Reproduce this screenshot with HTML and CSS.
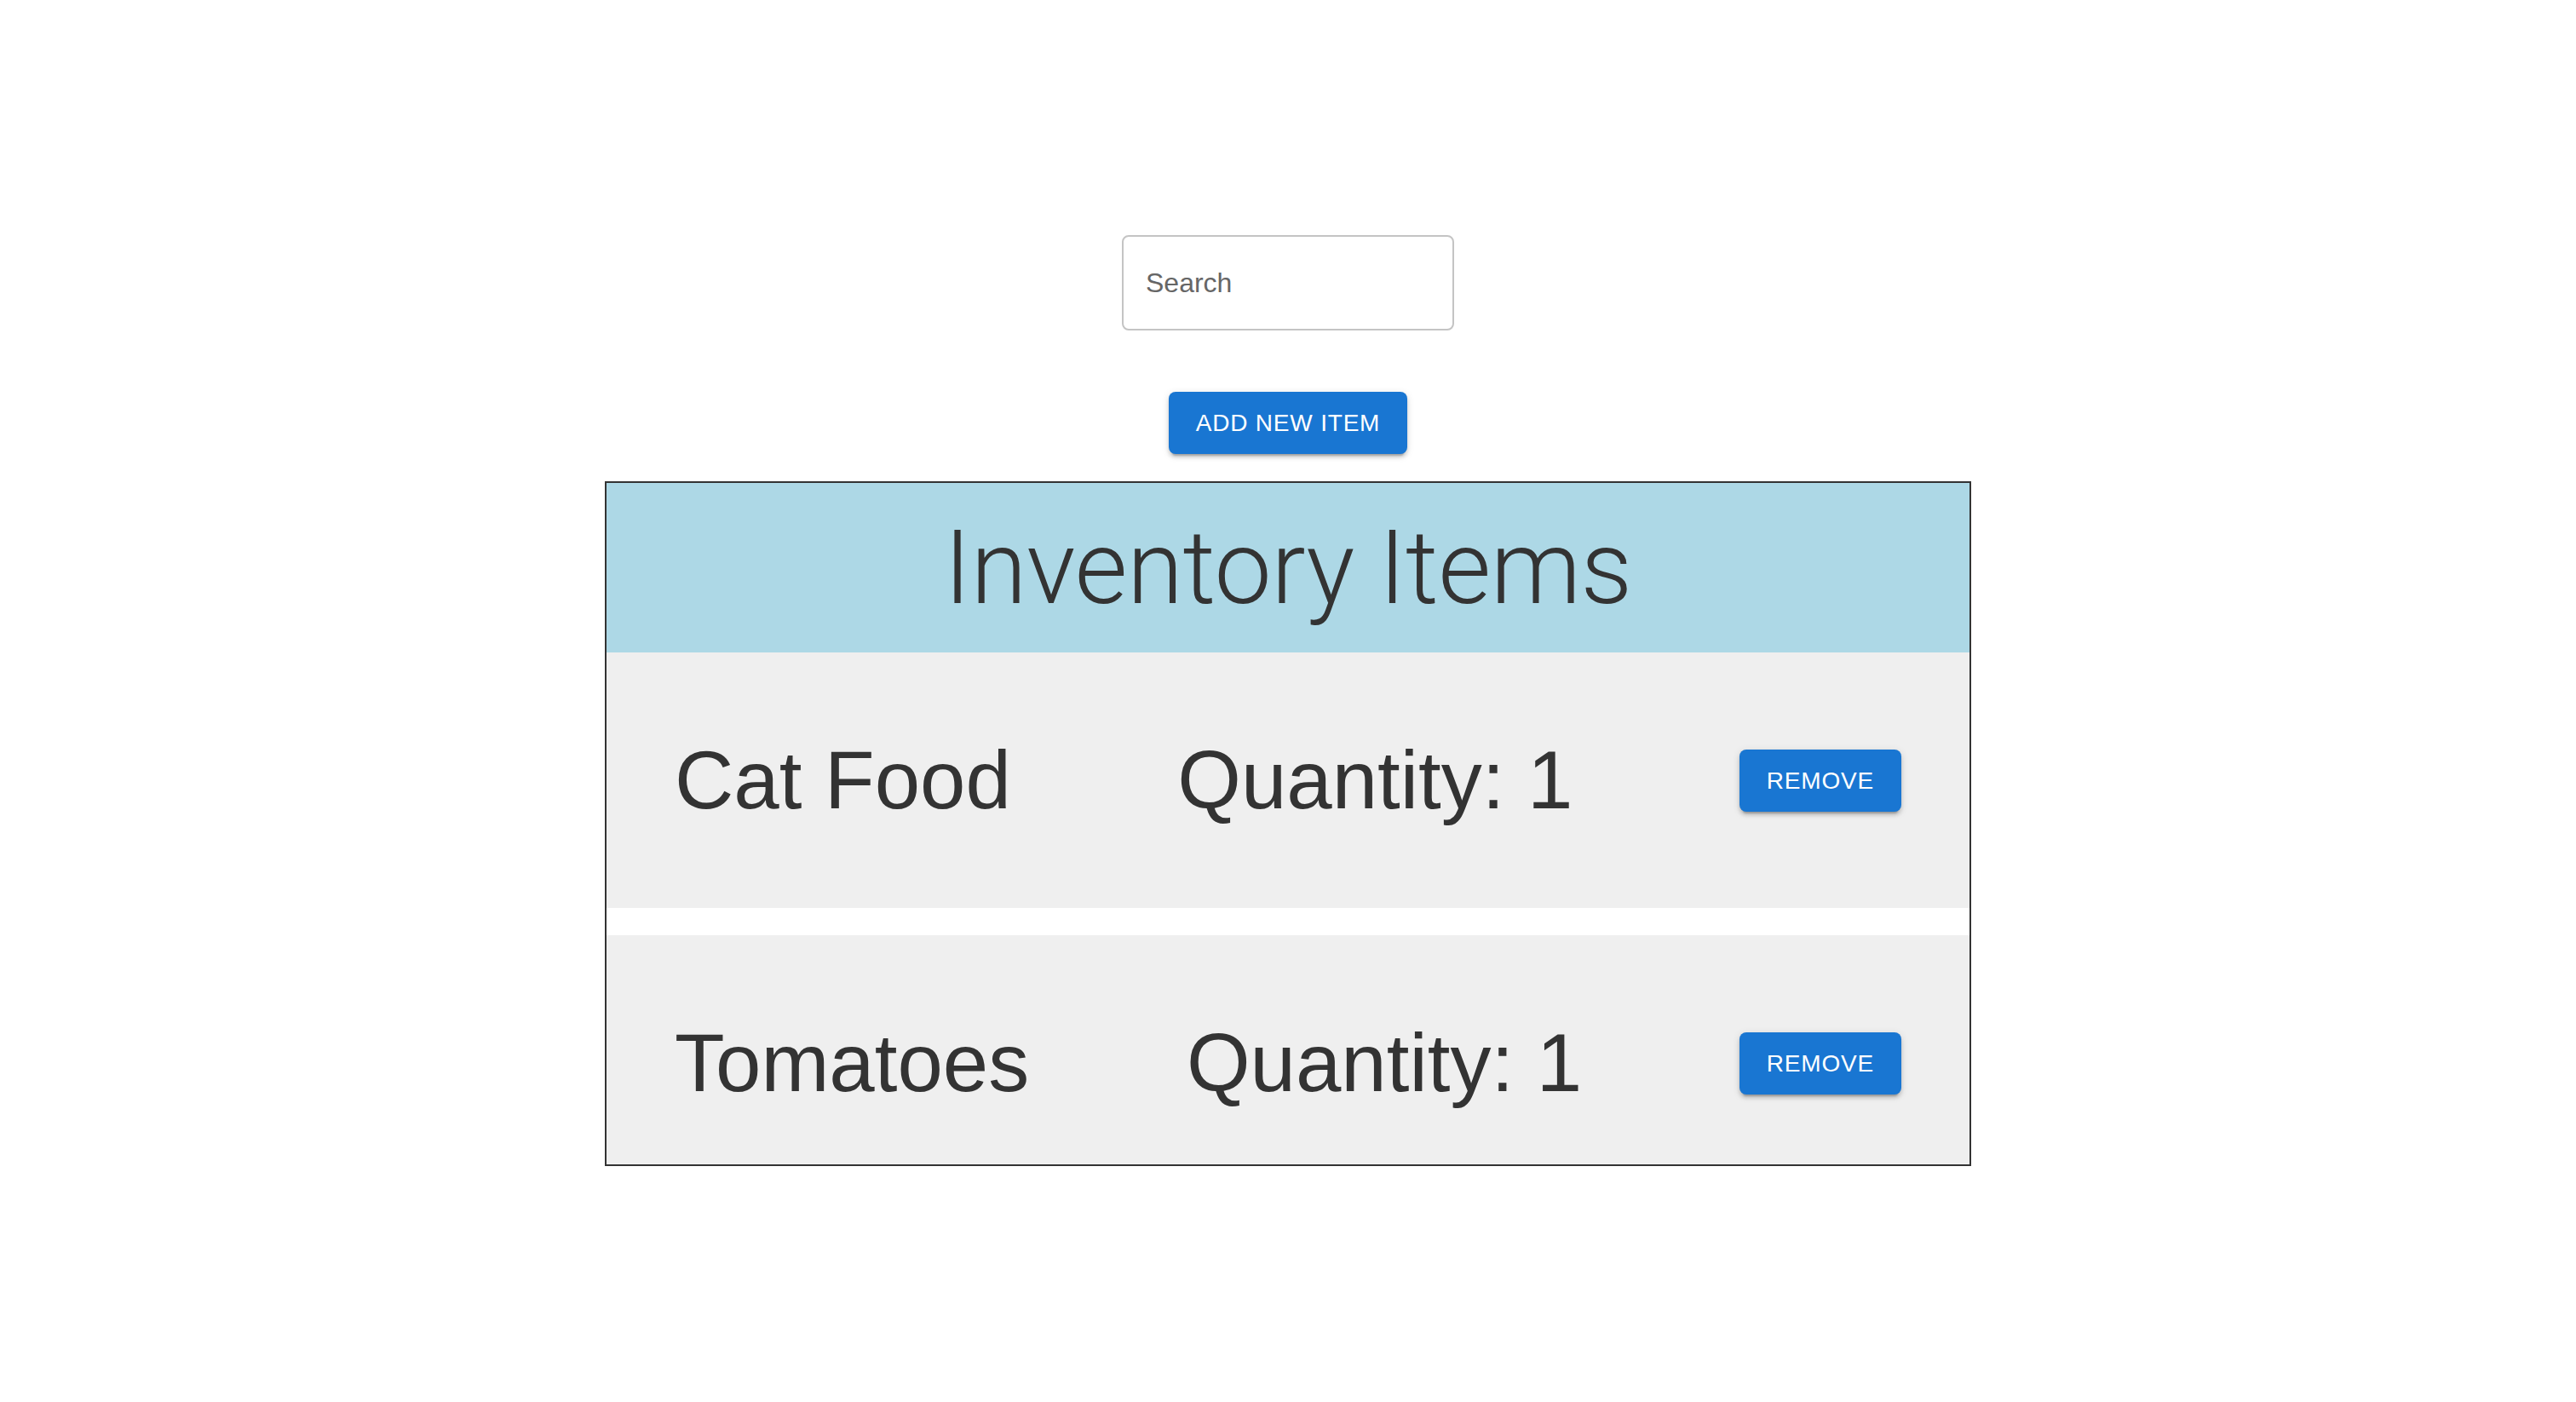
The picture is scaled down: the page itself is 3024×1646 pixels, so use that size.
FILE: index.html
```html
<!DOCTYPE html>
<html lang="en">
<head>
<meta charset="utf-8">
<title>Inventory</title>
<link rel="stylesheet" href="styles.css">
</head>
<body>
<div class="app">
  <div class="search">
    <input class="search-input" type="text" placeholder="Search">
  </div>
  <button class="btn btn-add">ADD NEW ITEM</button>
  <div class="inventory">
    <div class="inventory-header">
      <h2 class="inventory-title">Inventory Items</h2>
    </div>
    <div class="item-row">
      <h3 class="item-text">Cat Food</h3>
      <h3 class="item-text">Quantity: 1</h3>
      <button class="btn btn-remove">REMOVE</button>
    </div>
    <div class="item-row">
      <h3 class="item-text">Tomatoes</h3>
      <h3 class="item-text">Quantity: 1</h3>
      <button class="btn btn-remove">REMOVE</button>
    </div>
  </div>
</div>
</body>
</html>
```

FILE: styles.css
```css
html, body {
  margin: 0;
  padding: 0;
  background: #ffffff;
}

body {
  font-family: "Liberation Sans", Arial, Helvetica, sans-serif;
  color: #333333;
}

.app {
  display: flex;
  flex-direction: column;
  align-items: center;
  padding-top: 276px;
}

.search {
  width: 390px;
  height: 112px;
  box-sizing: border-box;
  border: 2px solid #c4c4c4;
  border-radius: 8px;
  display: flex;
  align-items: center;
}

.search-input {
  border: none;
  outline: none;
  background: transparent;
  width: 100%;
  box-sizing: border-box;
  padding: 0 26px;
  font-family: "Liberation Sans", Arial, Helvetica, sans-serif;
  font-size: 32px;
  color: #333333;
}

.search-input::placeholder {
  color: #666666;
  opacity: 1;
}

.btn {
  font-family: "Liberation Sans", Arial, Helvetica, sans-serif;
  font-size: 28px;
  font-weight: 400;
  letter-spacing: 0.8px;
  line-height: 49px;
  color: #ffffff;
  background: #1976d2;
  border: none;
  border-radius: 8px;
  padding: 12px 32px;
  box-shadow: 0 6px 2px -4px rgba(0, 0, 0, 0.2),
              0 4px 4px 0 rgba(0, 0, 0, 0.14),
              0 2px 10px 0 rgba(0, 0, 0, 0.12);
  cursor: pointer;
}

.btn-add {
  margin-top: 72px;
}

.inventory {
  margin-top: 32px;
  width: 1604px;
  height: 804px;
  box-sizing: border-box;
  border: 2px solid #333333;
  overflow: hidden;
}

.inventory-header {
  background: #add8e6;
  height: 199px;
  display: flex;
  align-items: center;
  justify-content: center;
}

.inventory-title {
  margin: 0;
  font-family: Roboto, "Liberation Sans", sans-serif;
  font-weight: 300;
  font-size: 120px;
  line-height: 144px;
  letter-spacing: -0.5px;
  color: #333333;
}

.item-row {
  background: #efefef;
  height: 300px;
  margin-bottom: 32px;
  padding: 0 80px;
  display: flex;
  align-items: center;
  justify-content: space-between;
}

.item-text {
  margin: 0;
  font-weight: 400;
  font-size: 96px;
  line-height: 112px;
  color: #333333;
}
```
